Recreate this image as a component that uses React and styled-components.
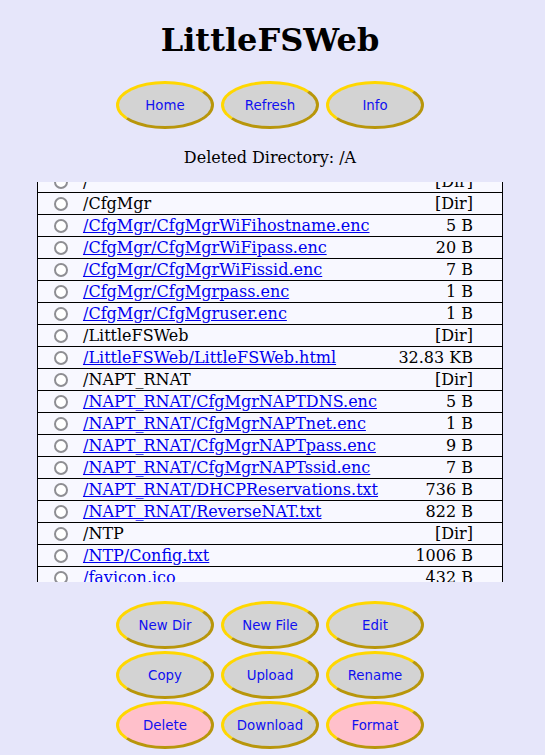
import { useEffect, useRef } from "react";
import styled, { createGlobalStyle } from "styled-components";

const Global = createGlobalStyle`
  html, body {
    margin: 0;
    background: #e6e6fa;
    font-family: "DejaVu Serif", serif;
  }
`;

const Page = styled.main`
  width: 540px;
  display: flex;
  flex-direction: column;
  align-items: center;
`;

const Title = styled.h1`
  margin: 22px 0 22px;
  font-size: 32px;
  line-height: 37px;
  font-weight: bold;
`;

const ButtonRow = styled.div`
  display: flex;
  gap: 7px;
  margin-bottom: ${(p) => p.$mb || 2}px;
`;

const Btn = styled.button`
  width: 98px;
  height: 48px;
  border-radius: 50%;
  border: 3px solid;
  border-color: #ffd700 #b8960b #b8960b #ffd700;
  background: ${(p) => (p.$danger ? "#ffc0cb" : "#d3d3d3")};
  color: #1010f0;
  font-family: "DejaVu Sans", sans-serif;
  font-size: 13.33px;
  padding: 0;
`;

const Status = styled.p`
  margin: 0 0 15px;
  font-size: 16px;
  line-height: 19px;
`;

const ListBox = styled.div`
  width: 466px;
  height: 400px;
  overflow-y: auto;
  scrollbar-width: none;
  margin-bottom: 19px;
  &::-webkit-scrollbar {
    display: none;
  }
`;

const Row = styled.div`
  display: grid;
  grid-template-columns: 45px 1fr auto;
  align-items: center;
  height: 21px;
  background: #f8f8ff;
  border: 1px solid #000;
  border-top: none;
  font-size: 16px;
  line-height: 19px;
`;

const Radio = styled.input`
  appearance: none;
  box-sizing: border-box;
  margin: 0 0 0 16px;
  width: 14px;
  height: 14px;
  border: 2px solid #8e8e93;
  border-radius: 50%;
  background: #fff;
`;

const Name = styled.span`
  white-space: nowrap;
  color: #000;
`;

const FileLink = styled.a`
  color: #0000ee;
  text-decoration: underline;
  white-space: nowrap;
`;

const Size = styled.span`
  padding-right: 29px;
  text-align: right;
`;

const entries = [
  ["/", null],
  ["/CfgMgr", null],
  ["/CfgMgr/CfgMgrWiFihostname.enc", "5 B"],
  ["/CfgMgr/CfgMgrWiFipass.enc", "20 B"],
  ["/CfgMgr/CfgMgrWiFissid.enc", "7 B"],
  ["/CfgMgr/CfgMgrpass.enc", "1 B"],
  ["/CfgMgr/CfgMgruser.enc", "1 B"],
  ["/LittleFSWeb", null],
  ["/LittleFSWeb/LittleFSWeb.html", "32.83 KB"],
  ["/NAPT_RNAT", null],
  ["/NAPT_RNAT/CfgMgrNAPTDNS.enc", "5 B"],
  ["/NAPT_RNAT/CfgMgrNAPTnet.enc", "1 B"],
  ["/NAPT_RNAT/CfgMgrNAPTpass.enc", "9 B"],
  ["/NAPT_RNAT/CfgMgrNAPTssid.enc", "7 B"],
  ["/NAPT_RNAT/DHCPReservations.txt", "736 B"],
  ["/NAPT_RNAT/ReverseNAT.txt", "822 B"],
  ["/NTP", null],
  ["/NTP/Config.txt", "1006 B"],
  ["/favicon.ico", "432 B"],
  ["/index.html", "1.21 KB"],
];

const App = () => {
  const box = useRef(null);
  useEffect(() => {
    if (box.current) box.current.scrollTop = 11;
  }, []);

  return (
    <>
      <Global />
      <Page>
        <Title>LittleFSWeb</Title>
        <ButtonRow $mb={19}>
          <Btn>Home</Btn>
          <Btn>Refresh</Btn>
          <Btn>Info</Btn>
        </ButtonRow>
        <Status>Deleted Directory: /A</Status>
        <ListBox ref={box}>
          {entries.map(([path, size]) => (
            <Row key={path}>
              <Radio type="radio" name="sel" />
              {size ? (
                <FileLink href="#">{path}</FileLink>
              ) : (
                <Name>{path}</Name>
              )}
              <Size>{size || "[Dir]"}</Size>
            </Row>
          ))}
        </ListBox>
        <ButtonRow>
          <Btn>New Dir</Btn>
          <Btn>New File</Btn>
          <Btn>Edit</Btn>
        </ButtonRow>
        <ButtonRow>
          <Btn>Copy</Btn>
          <Btn>Upload</Btn>
          <Btn>Rename</Btn>
        </ButtonRow>
        <ButtonRow>
          <Btn $danger>Delete</Btn>
          <Btn>Download</Btn>
          <Btn $danger>Format</Btn>
        </ButtonRow>
      </Page>
    </>
  );
};

export default App;
